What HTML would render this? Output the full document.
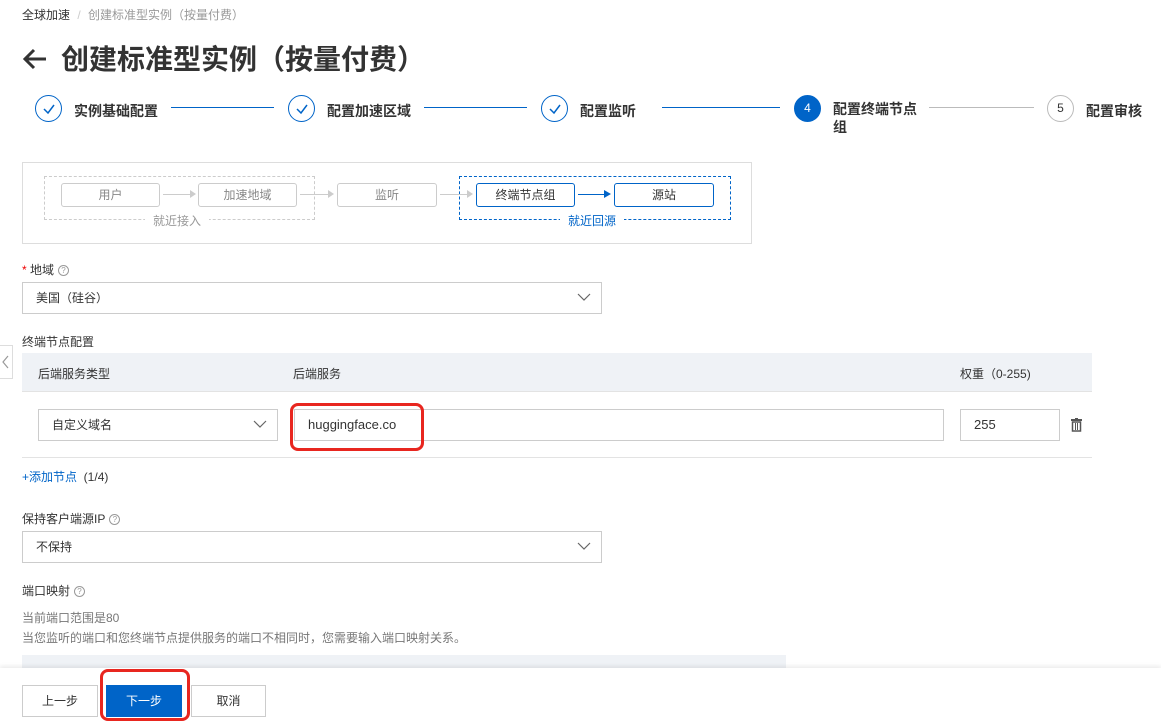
<!DOCTYPE html>
<html><head><meta charset="utf-8"><style>
*{box-sizing:border-box;margin:0;padding:0}
body{width:1161px;height:726px;overflow:hidden;background:#fff;position:relative;font-family:"Liberation Sans","Noto Sans CJK SC",sans-serif;color:#333;font-size:12px}
.a{position:absolute;white-space:nowrap}
.c{position:absolute;width:27px;height:27px;border-radius:50%;border:1px solid #0064c8;top:95px}
.c svg{position:absolute;left:6px;top:7px}
.sl{position:absolute;top:101px;font-size:14px;font-weight:bold;color:#333}
.ln{position:absolute;top:107px;height:1px;background:#0064c8}
.bx{position:absolute;top:183px;height:24px;border:1px solid #ccc;border-radius:3px;text-align:center;line-height:22px;color:#888;font-size:12px;background:#fff}
.bb{border-color:#0064c8;color:#333}
.ar{position:absolute;top:194px;height:1px;background:#ccc}
.sel{position:absolute;height:32px;border:1px solid #ccc;background:#fff;padding-left:13px;line-height:30px;font-size:12px;color:#333}
.chev{position:absolute;right:10px;top:9px}
.q{display:inline-block;width:11px;height:11px;border:1px solid #999;border-radius:50%;font-size:8px;line-height:9px;text-align:center;color:#999;margin-left:4px;vertical-align:1px}
.btn{position:absolute;top:685px;height:32px;border:1px solid #ccc;background:#fff;text-align:center;line-height:30px;font-size:12px;color:#333}
</style></head><body>
<div class="a" style="left:22px;top:6px;color:#333">全球加速 <span style="color:#ccc;margin:0 4px">/</span> <span style="color:#999">创建标准型实例（按量付费）</span></div>
<svg class="a" style="left:22px;top:48px" width="26" height="22"><path d="M24 11 H3 M12 2 L3 11 L12 20" fill="none" stroke="#333" stroke-width="3"/></svg>
<div class="a" style="left:61px;top:38px;font-size:28px;font-weight:bold;color:#333">创建标准型实例（按量付费）</div>

<div class="c" style="left:35px"><svg width="14" height="12"><path d="M2 6 L6 10 L12 2" fill="none" stroke="#0064c8" stroke-width="1.5"/></svg></div>
<div class="sl" style="left:74px">实例基础配置</div>
<div class="ln" style="left:171px;width:103px"></div>
<div class="c" style="left:288px"><svg width="14" height="12"><path d="M2 6 L6 10 L12 2" fill="none" stroke="#0064c8" stroke-width="1.5"/></svg></div>
<div class="sl" style="left:327px">配置加速区域</div>
<div class="ln" style="left:424px;width:103px"></div>
<div class="c" style="left:541px"><svg width="14" height="12"><path d="M2 6 L6 10 L12 2" fill="none" stroke="#0064c8" stroke-width="1.5"/></svg></div>
<div class="sl" style="left:580px">配置监听</div>
<div class="ln" style="left:662px;width:118px"></div>
<div class="c" style="left:794px;background:#0064c8;color:#fff;text-align:center;line-height:25px;font-size:12px">4</div>
<div class="sl" style="left:833px;line-height:18px;top:100px">配置终端节点<br>组</div>
<div class="ln" style="left:929px;width:105px;background:#bbb"></div>
<div class="c" style="left:1047px;border-color:#bbb;text-align:center;line-height:25px;font-size:12px;color:#333">5</div>
<div class="sl" style="left:1086px">配置审核</div>

<div class="a" style="left:22px;top:162px;width:730px;height:82px;border:1px solid #ddd"></div>
<div class="a" style="left:44px;top:176px;width:271px;height:44px;border:1px dashed #ccc"></div>
<div class="a" style="left:459px;top:176px;width:272px;height:44px;border:1px dashed #0064c8"></div>
<div class="a" style="left:145px;top:212px;background:#fff;padding:0 8px;color:#999">就近接入</div>
<div class="a" style="left:560px;top:212px;background:#fff;padding:0 8px;color:#0064c8">就近回源</div>
<div class="bx" style="left:61px;width:99px">用户</div>
<div class="bx" style="left:198px;width:99px">加速地域</div>
<div class="bx" style="left:337px;width:100px">监听</div>
<div class="bx bb" style="left:476px;width:99px">终端节点组</div>
<div class="bx bb" style="left:614px;width:100px">源站</div>
<div class="ar" style="left:163px;width:30px"></div><div class="a" style="left:190px;top:190px;border-left:6px solid #ccc;border-top:4px solid transparent;border-bottom:4px solid transparent"></div>
<div class="ar" style="left:300px;width:30px"></div><div class="a" style="left:328px;top:190px;border-left:6px solid #ccc;border-top:4px solid transparent;border-bottom:4px solid transparent"></div>
<div class="ar" style="left:440px;width:30px"></div><div class="a" style="left:467px;top:190px;border-left:6px solid #ccc;border-top:4px solid transparent;border-bottom:4px solid transparent"></div>
<div class="ar" style="left:578px;width:30px;background:#0064c8"></div><div class="a" style="left:604px;top:190px;border-left:7px solid #0064c8;border-top:4px solid transparent;border-bottom:4px solid transparent"></div>

<div class="a" style="left:22px;top:261px"><span style="color:#e00">*</span> 地域<span class="q">?</span></div>
<div class="sel" style="left:22px;top:282px;width:580px">美国（硅谷）<svg class="chev" width="14" height="10"><path d="M1 2 L7 8 L13 2" fill="none" stroke="#666" stroke-width="1.2"/></svg></div>
<div class="a" style="left:22px;top:333px">终端节点配置</div>
<div class="a" style="left:0;top:345px;width:13px;height:34px;border:1px solid #ddd;border-left:none;background:#fff"><svg width="10" height="32"><path d="M8 10 L3 16 L8 22" fill="none" stroke="#999" stroke-width="1.2"/></svg></div>
<div class="a" style="left:22px;top:353px;width:1070px;height:39px;background:#eff2f6;border-bottom:1px solid #e3e3e3"></div>
<div class="a" style="left:38px;top:365px">后端服务类型</div>
<div class="a" style="left:293px;top:365px">后端服务</div>
<div class="a" style="left:960px;top:365px">权重（0-255)</div>
<div class="sel" style="left:38px;top:409px;width:240px">自定义域名<svg class="chev" width="14" height="10"><path d="M1 2 L7 8 L13 2" fill="none" stroke="#666" stroke-width="1.2"/></svg></div>
<div class="sel" style="left:294px;top:409px;width:650px;font-size:13px">huggingface.co</div>
<div class="sel" style="left:960px;top:409px;width:100px;font-size:13px">255</div>
<svg class="a" style="left:1071px;top:418px" width="11" height="14"><rect x="0" y="1" width="11" height="2" fill="#555"/><rect x="4" y="0" width="3" height="2" fill="#555"/><rect x="1.5" y="4" width="8" height="9" fill="none" stroke="#555" stroke-width="1.5"/><path d="M4.5 5v7M6.5 5v7" stroke="#555"/></svg>
<div class="a" style="left:22px;top:457px;width:1070px;height:1px;background:#e3e3e3"></div>
<div class="a" style="left:290px;top:403px;width:134px;height:48px;border:3px solid #e8261f;border-radius:8px"></div>
<div class="a" style="left:22px;top:468px"><span style="color:#0064c8">+添加节点</span> &nbsp;(1/4)</div>

<div class="a" style="left:22px;top:510px">保持客户端源IP<span class="q">?</span></div>
<div class="sel" style="left:22px;top:531px;width:580px">不保持<svg class="chev" width="14" height="10"><path d="M1 2 L7 8 L13 2" fill="none" stroke="#666" stroke-width="1.2"/></svg></div>
<div class="a" style="left:22px;top:582px">端口映射<span class="q">?</span></div>
<div class="a" style="left:22px;top:609px;color:#777">当前端口范围是80</div>
<div class="a" style="left:22px;top:629px;color:#777">当您监听的端口和您终端节点提供服务的端口不相同时，您需要输入端口映射关系。</div>
<div class="a" style="left:22px;top:655px;width:764px;height:20px;background:#eff2f6"></div>

<div class="a" style="left:0;top:668px;width:1161px;height:58px;background:#fff;box-shadow:0 -2px 4px rgba(0,0,0,0.08)"></div>
<div class="btn" style="left:22px;width:76px">上一步</div>
<div class="btn" style="left:106px;width:76px;background:#0064c8;border-color:#0064c8;color:#fff">下一步</div>
<div class="btn" style="left:191px;width:75px">取消</div>
<div class="a" style="left:100px;top:669px;width:90px;height:52px;border:3px solid #e8261f;border-radius:8px"></div>
</body></html>
